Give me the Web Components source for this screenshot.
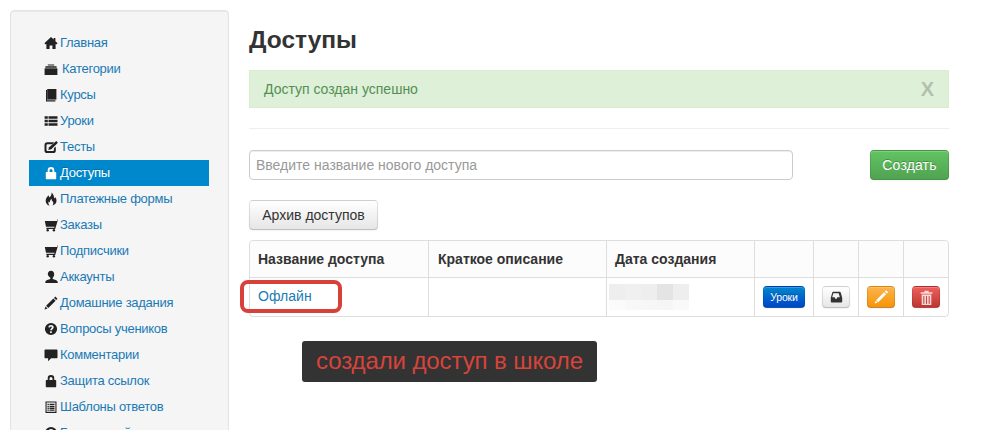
<!DOCTYPE html>
<html lang="ru">
<head>
<meta charset="utf-8">
<title>Доступы</title>
<style>
  html, body { margin: 0; height: 430px; overflow: hidden; background: #fff; }
  body { font: 13px/20px "Liberation Sans", Arial, sans-serif; color: #333; }
</style>
</head>
<body>
<app-page>
  <side-nav slot="side">
    <nav-item icon="home">Главная</nav-item>
    <nav-item icon="folder" gap="4">Категории</nav-item>
    <nav-item icon="book">Курсы</nav-item>
    <nav-item icon="list">Уроки</nav-item>
    <nav-item icon="check">Тесты</nav-item>
    <nav-item icon="lock" active>Доступы</nav-item>
    <nav-item icon="fire">Платежные формы</nav-item>
    <nav-item icon="cart">Заказы</nav-item>
    <nav-item icon="cart">Подписчики</nav-item>
    <nav-item icon="user">Аккаунты</nav-item>
    <nav-item icon="pencil">Домашние задания</nav-item>
    <nav-item icon="question">Вопросы учеников</nav-item>
    <nav-item icon="comment">Комментарии</nav-item>
    <nav-item icon="lock">Защита ссылок</nav-item>
    <nav-item icon="listalt">Шаблоны ответов</nav-item>
    <nav-item icon="question">Бесплатный</nav-item>
  </side-nav>
  <access-panel></access-panel>
</app-page>

<script>
const ICONS = {
  home: '<path fill-rule="evenodd" d="M7 1 .4 7.300l.9.900h1.100V13h3.200V9.600h2.800V13h3.200V8.200h1.100l.9-.9-2.200-2.100V2h-1.800v1.500z"/>',
  folder: '<path d="M3.800 2.400h6.400v1.200H3.800zM1.400 4.200h11.200v1.500H1.400z"/><path d="M.6 6.300h12.800V13H.6z"/>',
  book: '<path d="M3.200 1h9.200v10.600H3.200z"/><path d="M2 2v11.600h9.400v-1.300H3.100V2z"/>',
  list: '<path d="M.6 2.200h3.200v2.600H.6zM4.500 2.200h9v2.600h-9zM.6 5.700h3.200v2.600H.6zM4.500 5.700h9v2.600h-9zM.6 9.200h3.200v2.600H.6zM4.500 9.200h9v2.600h-9z"/>',
  check: '<path fill-rule="evenodd" d="M3.200 2.300h7L8.300 4.200H3.500a1 1 0 0 0-1 1v4.900a1 1 0 0 0 1 1h5.400a1 1 0 0 0 1-1V8.300l1.900-1.900v4a2.700 2.700 0 0 1-2.700 2.700H3.200A2.700 2.700 0 0 1 .5 10.400V5a2.700 2.700 0 0 1 2.700-2.700z"/><path d="M12.300 1l1.600 1.700L7.300 9.300l-3 .7.800-2.800z"/>',
  lock: '<path fill-rule="evenodd" d="M3.700 6V4.400a3.300 3.300 0 0 1 6.600 0V6h1.300c.4 0 .6.200.6.600v6c0 .3-.2.600-.6.600H2.400a.6.600 0 0 1-.6-.6v-6c0-.4.200-.6.600-.6zm1.800 0h3V4.500a1.500 1.500 0 0 0-3 0z"/>',
  fire: '<path d="M7.400.6c.7 2.200-.6 3.400-1.800 4.800C4.900 4.800 4.700 4.100 4.800 3.300 2.800 5 1.400 7 1.700 9.400 2 11.700 3.600 13.100 5.600 13.600 4.400 12.400 4 11 4.700 9.600c.4.500.7.800 1.200.900C5.700 9 6.400 7.700 7.700 6.800c-.2 1.400.4 2 1.200 2.900.6.800.7 2.500-.5 3.900 2.500-.6 4.100-2.500 4.100-4.800 0-1.600-.7-2.800-1.500-3.700-.1.700-.4 1.200-1 1.500C10.200 4.500 9.500 2.100 7.400.6z"/>',
  cart: '<path d="M14 .8 13.100 3H.8l1.200 5.700h8.600l-.3 1H2.400v1.300h8.800L13.900 2H14z"/><circle cx="3.700" cy="12.300" r="1.200"/><circle cx="9.900" cy="12.300" r="1.200"/>',
  user: '<path d="M7 .8c1.900 0 3.200 1.300 3.200 3.400 0 1.400-.6 2.800-1.500 3.500v1.200c1.900.6 4.600 1.300 5 2.800v1.300H1.300v-1.300c.4-1.500 3.100-2.200 5-2.800V7.700C5.400 7 3.800 5.600 3.800 4.200 3.800 2.100 5.100.8 7 .8z"/>',
  pencil: '<path d="M11.300.6 13.500 2.800 12.200 4.100 10 1.900zM9.400 2.500l2.200 2.200-7.300 7.300-2.200-2.200zM1.500 10.400l2.100 2.100-3.100 1z"/>',
  question: '<path fill-rule="evenodd" d="M7 .9a6.100 6.100 0 1 1 0 12.200A6.100 6.100 0 0 1 7 .9zM7 3C5.500 3 4.500 3.800 4.300 5.300l1.700.2c.1-.7.500-1 1-1s.9.300.9.800c0 .9-1.700 1.200-1.700 3h1.700c0-1 1.800-1.400 1.800-3.100C9.700 3.800 8.500 3 7 3zM6.100 9.300v1.700h1.700V9.300z"/>',
  comment: '<path d="M1.300 1.600h11.400c.5 0 .8.300.8.800v7.100c0 .4-.3.800-.8.800H7.100l-3 2.900v-2.900H1.300a.8.8 0 0 1-.8-.8V2.400c0-.5.300-.8.800-.8z"/>',
  listalt: '<path fill-rule="evenodd" d="M1.500 1.500h11v11.400h-11zM2.600 2.600v9.200h8.800V2.600zM3.500 3.700h1.300V5H3.500zM5.500 3.700h5V5h-5zM3.500 5.700h1.300V7H3.500zM5.500 5.700h5V7h-5zM3.500 7.600h1.300v1.300H3.500zM5.500 7.600h5v1.300h-5zM3.500 9.500h1.300v1.300H3.500zM5.500 9.500h5v1.300h-5z"/>',
  inbox: '<path fill-rule="evenodd" d="M3.200 1.800h7.600c.4 0 .7.200.9.600l1.500 5.400v3.700c0 .5-.4.900-.9.900H2.700a.9.9 0 0 1-.9-.9V7.800l1.500-5.400c.1-.4.400-.6.800-.6zM4.300 3.300 3.200 7.300h2.500l.5 1.400h1.600l.5-1.400h2.500l-1.100-4z"/>',
  pen: '<path d="M11.500 1 13.300 2.800 12.100 4 10.300 2.200zM9.700 2.800l1.800 1.800-7 7-1.800-1.800zM2.300 10.200l1.700 1.700-2.500.8z"/>',
  trash: '<path d="M5 .8h4V2h3.500v1.500h-11V2H5z"/><path fill-rule="evenodd" d="M2.500 4.300h9V14h-9zM4 5.500v7.300h1V5.500zM6.500 5.500v7.300h1V5.500zM9 5.500v7.300h1V5.500z"/>'
};

function iconSvg(name, size = 14) {
  return `<svg width="${size}" height="${size}" viewBox="0 0 14 14" fill="currentColor" aria-hidden="true">${ICONS[name]}</svg>`;
}

const define = (tag, css, html, init) => {
  customElements.define(tag, class extends HTMLElement {
    connectedCallback() {
      if (this.shadowRoot)
        return;
      this.attachShadow({ mode: 'open' });
      this.shadowRoot.innerHTML = `<style>${css}</style>${typeof html == 'function' ? html(this) : html}`;
      if (init)
        init(this);
    }
  });
};

define('app-page', `
  :host { display: flex; align-items: flex-start; gap: 20px; padding: 10px 0 0 10px; height: 430px; box-sizing: border-box; overflow: hidden; }
  .main { width: 700px; flex: none; }
`, `<slot name="side"></slot><div class="main"><slot></slot></div>`);

define('side-nav', `
  :host {
    display: block; flex: none; width: 219px; box-sizing: border-box; height: 500px;
    padding: 19px 19px 0 18px; background: #f5f5f5;
    border: 1px solid #e3e3e3; border-radius: 4px;
    box-shadow: inset 0 1px 1px rgba(0,0,0,.05);
  }
`, `<slot></slot>`);

define('nav-item', `
  :host { display: flex; align-items: center; height: 26px; padding-left: 15px; color: #1a7ab5; font-size: 13px; letter-spacing: -.27px; }
  :host([active]) { background: #0088cc; color: #fff; text-shadow: 0 -1px 0 rgba(0,0,0,.2); }
  svg { flex: none; color: #222; margin-top: -1px; }
  :host([active]) svg { color: #fff; }
`, (el) => `${iconSvg(el.getAttribute('icon'))}<span style="margin-left:${el.getAttribute('gap') || 2}px"><slot></slot></span>`);

define('ui-btn', `
  :host { display: inline-flex; align-items: center; justify-content: center; box-sizing: border-box; border-radius: 4px; border: 1px solid #bbb; border-color: rgba(0,0,0,.1) rgba(0,0,0,.1) rgba(0,0,0,.25); box-shadow: inset 0 1px 0 rgba(255,255,255,.2), 0 1px 2px rgba(0,0,0,.05); color: #333; background: linear-gradient(#fff,#e6e6e6); }
  :host([kind=success]) { background: linear-gradient(#62c462,#51a351); color: #fff; text-shadow: 0 -1px 0 rgba(0,0,0,.25); }
  :host([kind=primary]) { background: linear-gradient(#0088cc,#0044cc); color: #fff; text-shadow: 0 -1px 0 rgba(0,0,0,.25); }
  :host([kind=warning]) { background: linear-gradient(#fbb450,#f89406); color: #fff; }
  :host([kind=danger]) { background: linear-gradient(#ee5f5b,#bd362f); color: rgba(255,255,255,.8); }
  :host([size=mini]) { height: 22px; font-size: 10.5px; letter-spacing: -.2px; }
`, `<slot></slot>`);

define('blur-patch', `
  :host { display: grid; grid-template-columns: repeat(5, 16px); grid-template-rows: 16px 10px; width: 80px; }
  i { display: block; }
`, () => ['#eeeeee','#f0f0f0','#eeeeee','#e4e4e4','#eeeeee','#fbfbfb','#f8f8f8','#f7f7f7','#f6f6f6','#f9f9f9']
  .map(c => `<i style="background:${c}"></i>`).join(''));

define('access-panel', `
  :host { display: block; position: relative; height: 420px; font-size: 14px; }
  h1 { margin: 0; padding-top: 13px; height: 47px; box-sizing: border-box; font-size: 24.5px; line-height: 34px; color: #333; }
  .alert { display: flex; align-items: center; justify-content: space-between; height: 38px; margin-top: 13px; box-sizing: border-box; padding: 0 14px; background: #dff0d8; border: 1px solid #d9ecd0; color: #538f55; font-size: 14px; }
  .alert b { font-size: 20px; color: #000; opacity: .2; }
  hr { margin: 20px 0 21px; border: 0; border-top: 1px solid #eee; }
  .create { display: flex; justify-content: space-between; align-items: stretch; height: 30px; }
  input { width: 544px; box-sizing: border-box; padding: 0 6px; border: 1px solid #ccc; border-radius: 4px; box-shadow: inset 0 1px 1px rgba(0,0,0,.075); font: 14px "Liberation Sans", Arial, sans-serif; color: #555; outline: 0; }
  input::placeholder { color: #999; opacity: 1; }
  .create ui-btn { width: 79px; font-size: 14px; letter-spacing: .15px; }
  .archive { margin-top: 20px; height: 30px; width: 129px; font-size: 14px; }
  .grid { display: grid; grid-template-columns: 178px 178px 148px 59px 45px 45px 45px; grid-template-rows: 36px 39px; margin-top: 10px; height: 77px; box-sizing: border-box; border: 1px solid #ddd; border-radius: 4px; }
  .grid > div { display: flex; align-items: center; box-sizing: border-box; border-left: 1px solid #ddd; padding-left: 8px; }
  .grid > div:nth-child(7n+1) { border-left: 0; }
  .grid > div:nth-child(n+8) { border-top: 1px solid #ddd; }
  .grid > .th { font-weight: bold; background: #fcfcfc; }
  .grid > .th:first-child { border-top-left-radius: 4px; }
  .grid > .th:nth-child(2) { padding-left: 9px; }
  .grid > .th:nth-child(7) { border-top-right-radius: 4px; }
  .grid > .btn { justify-content: center; padding-left: 0; }
  .grid > .date { padding-left: 2px; }
  a { color: #1a7ab5; text-decoration: none; margin-top: -2px; }
  .uroki { width: 42px; }
  .ico { width: 28px; }
  .ico svg { display: block; }
  .mark { position: absolute; left: -9px; top: 270px; width: 102px; height: 33px; box-sizing: border-box; border: 4px solid #d8403a; border-radius: 8px; }
  .note { position: absolute; left: 53px; top: 331px; width: 295px; height: 41px; box-sizing: border-box; padding-left: 14px; background: #333; border-radius: 3px; color: #d8433b; font-size: 24px; line-height: 40px; letter-spacing: -.1px; white-space: nowrap; }
`, `
  <h1>Доступы</h1>
  <div class="alert"><span>Доступ создан успешно</span><b>X</b></div>
  <hr>
  <div class="create">
    <input type="text" placeholder="Введите название нового доступа">
    <ui-btn kind="success">Создать</ui-btn>
  </div>
  <ui-btn class="archive">Архив доступов</ui-btn>
  <div class="grid">
    <div class="th">Название доступа</div>
    <div class="th">Краткое описание</div>
    <div class="th">Дата создания</div>
    <div class="th"></div><div class="th"></div><div class="th"></div><div class="th"></div>
    <div><a href="#">Офлайн</a></div>
    <div></div>
    <div class="date"><blur-patch></blur-patch></div>
    <div class="btn"><ui-btn class="uroki" kind="primary" size="mini">Уроки</ui-btn></div>
    <div class="btn"><ui-btn class="ico" size="mini">${iconSvg('inbox')}</ui-btn></div>
    <div class="btn"><ui-btn class="ico" kind="warning" size="mini">${iconSvg('pen', 16)}</ui-btn></div>
    <div class="btn"><ui-btn class="ico" kind="danger" size="mini">${iconSvg('trash', 15)}</ui-btn></div>
  </div>
  <div class="mark"></div>
  <div class="note">создали доступ в школе</div>
`);
</script>
</body>
</html>
